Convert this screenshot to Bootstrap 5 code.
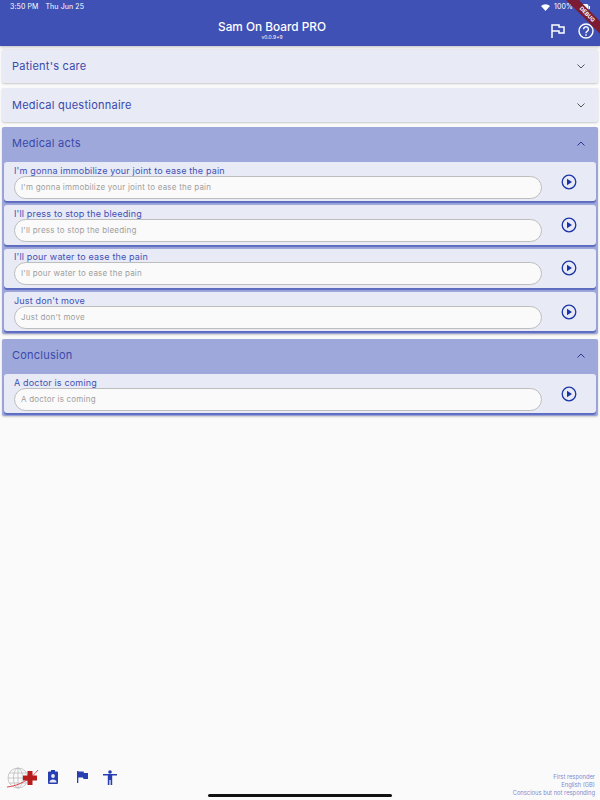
<!DOCTYPE html>
<html lang="en">
<head>
  <meta charset="UTF-8" />
  <meta name="viewport" content="width=device-width, initial-scale=1" />
  <title>Sam On Board PRO</title>
  <link href="https://cdn.jsdelivr.net/npm/bootstrap@5.3.2/dist/css/bootstrap.min.css" rel="stylesheet">
  <style>
    html, body { height: 100%; }
    body {
      font-family: Inter, "Liberation Sans", sans-serif;
      background: #fafafa;
      height: 800px;
      overflow: hidden;
      position: relative;
    }
    .app-bar { background: #3f51b5; color: #fff; height: 46px; box-shadow: 0 1px 3px rgba(0,0,0,.25); position: relative; overflow: hidden; }
    .status-row { height: 14px; padding: 0 10px 0 10px; font-size: 7px; line-height: 14px; letter-spacing: .1px; }
    .status-row .time { margin-right: 7px; }
    .title-row { height: 32px; position: relative; padding-right: 56px; padding-top: 6px; }
    .app-title { font-size: 11.8px; font-weight: 500; line-height: 14px; }
    .app-version { font-size: 5px; line-height: 6px; margin-top: 0; }
    .bar-actions { position: absolute; right: 6px; top: 9px; }
    .help-icon { margin-left: 13px; }
    .debug-ribbon {
      position: absolute; top: 10px; right: -16px; width: 58px; height: 9px;
      background: #7b1c33; color: #fff; font-size: 5.5px; font-weight: 700; line-height: 9px;
      text-align: center; transform: rotate(45deg);
    }
    .panels { padding: 3px 2px 0; }
    .panel-box { background: #e8eaf6; margin-bottom: 5px; border-radius: 2px; box-shadow: 0 1px 2px rgba(0,0,0,.2); }
    .panel-box.is-open { background: #9fa8da; margin-bottom: 4.67px; padding-bottom: 3px; }
    .panel-head { height: 34px; padding: 1px 13px 0 10px; color: #3949ab; font-size: 11px; letter-spacing: .24px; }
    .is-open .panel-head { height: 35px; padding: 0 13px 2px 10px; }
    .act-item {
      background: #e8eaf6; margin: 0 2px 4px; height: 39.33px; border-radius: 3px;
      padding: 2.7px 19px 0 10px; box-shadow: 0 2px 1px #5c6bc0;
    }
    .act-item:last-child { margin-bottom: 0; }
    .act-label { font-size: 9px; line-height: 11px; color: #3f51b5; letter-spacing: .17px; }
    .act-input {
      height: 23px; border: 1px solid #bdbdbd; border-radius: 12px; background: #fafafa;
      font-size: 8px; line-height: 21px; color: #9e9e9e; padding: 0 6px; width: 528px; letter-spacing: .21px;
    }
    .play-btn { margin-top: 9px; }
    .bottom-bar { position: absolute; left: 0; right: 0; bottom: 0; height: 36px; padding: 0 5px 0 7px; }
    .bottom-icons { padding-bottom: 10px; }
    .badge-icon { margin-left: 9px; }
    .flag-icon { margin-left: 19px; }
    .person-icon { margin-left: 15px; }
    .bottom-info { font-size: 5.8px; line-height: 8px; color: #7f8bcf; text-align: right; padding-bottom: 3px; }
    .home-line { position: absolute; left: 208px; bottom: 3px; width: 184px; height: 3px; border-radius: 2px; background: #111; }
  </style>
</head>
<body>

<div class="app-bar">
  <div class="status-row d-flex justify-content-between">
    <div><span class="time">3:50 PM</span>Thu Jun 25</div>
    <div class="d-flex align-items-center gap-1">
      <svg width="9" height="7" viewBox="0 0 18 14"><path d="M9 14 0 4a13 13 0 0 1 18 0z" fill="#fff"/></svg>
      <span>100%</span>
      <svg width="13" height="7" viewBox="0 0 13 7"><rect width="11.500" height="7" rx="2" fill="#fff"/><rect x="12" y="2" width="1" height="3" fill="#fff"/></svg>
    </div>
  </div>
  <div class="title-row text-center">
    <div class="app-title">Sam On Board PRO</div>
    <div class="app-version">v0.0.9+9</div>
    <div class="bar-actions d-flex align-items-center">
      <svg width="14" height="14" viewBox="0 0 14 14" fill="none" stroke="#fff" stroke-width="1.500"><path d="M1 14V1h7v2h5v6H8V7H1"/></svg>
      <svg class="help-icon" width="16" height="16" viewBox="0 0 16 16" fill="none" stroke="#fff" stroke-width="1.400"><circle cx="8" cy="8" r="7"/><path d="M5.600 6.200A2.400 2.400 0 1 1 9.200 8.300C8.400 8.800 8 9.200 8 10.200"/><path d="M8 11.200v1.600"/></svg>
    </div>
  </div>
  <div class="debug-ribbon">DEBUG</div>
</div>

<div class="panels">
  <div class="panel-box">
    <div class="panel-head d-flex justify-content-between align-items-center">
      <span>Patient's care</span>
      <svg width="8" height="5" viewBox="0 0 8 5" fill="none" stroke="#555" stroke-width="1"><path d="M.5.5 4 4 7.500 .5"/></svg>
    </div>
  </div>
  <div class="panel-box">
    <div class="panel-head d-flex justify-content-between align-items-center">
      <span>Medical questionnaire</span>
      <svg width="8" height="5" viewBox="0 0 8 5" fill="none" stroke="#555" stroke-width="1"><path d="M.5.5 4 4 7.500 .5"/></svg>
    </div>
  </div>
  <div class="panel-box is-open">
    <div class="panel-head d-flex justify-content-between align-items-center">
      <span>Medical acts</span>
      <svg width="8" height="5" viewBox="0 0 8 5" fill="none" stroke="#283593" stroke-width="1"><path d="M.5 4.500 4 1 7.500 4.500"/></svg>
    </div>
    <div id="actsList"></div>
  </div>
  <div class="panel-box is-open">
    <div class="panel-head d-flex justify-content-between align-items-center">
      <span>Conclusion</span>
      <svg width="8" height="5" viewBox="0 0 8 5" fill="none" stroke="#283593" stroke-width="1"><path d="M.5 4.500 4 1 7.500 4.500"/></svg>
    </div>
    <div id="conclusionList"></div>
  </div>
</div>

<div class="bottom-bar d-flex justify-content-between align-items-end">
  <div class="bottom-icons d-flex align-items-center">
    <svg width="32" height="26" viewBox="0 0 32 26">
      <g fill="none" stroke="#b5b5b5" stroke-width=".7"><circle cx="11" cy="14" r="10"/><ellipse cx="11" cy="14" rx="4.500" ry="10"/><path d="M1 14h20M2.500 9h17M2.500 19h17M11 4v20"/></g>
      <path d="M0 23C12 22 24 15 31 6" fill="none" stroke="#d9363e" stroke-width=".9"/>
      <path d="M20.500 7h5v4.500H30v5h-4.500V21h-5v-4.500H16v-5h4.500z" fill="#b71c1c"/>
    </svg>
    <svg class="badge-icon" width="10" height="14" viewBox="0 0 10 14"><path d="M1 1.500h8a1 1 0 0 1 1 1V13a1 1 0 0 1-1 1H1a1 1 0 0 1-1-1V2.500a1 1 0 0 1 1-1z" fill="#283fb1"/><rect x="3" y="0" width="4" height="2" fill="#283fb1"/><circle cx="5" cy="6" r="1.900" fill="#e8eaf6"/><path d="M1.500 12.500c0-2.200 1.500-3 3.500-3s3.500.8 3.500 3z" fill="#e8eaf6"/></svg>
    <svg class="flag-icon" width="11" height="12" viewBox="0 0 11 12"><path d="M0 0h1.300v12H0zM1.300 .5H6.500l.5 1.500h4v6H6.500L6 6.500H1.300z" fill="#283fb1"/></svg>
    <svg class="person-icon" width="14" height="15" viewBox="0 0 14 15"><circle cx="7" cy="2" r="1.800" fill="#283fb1"/><path d="M0 4h14v1.600H9.200V15H7.600v-5H6.400v5H4.800V5.600H0z" fill="#283fb1"/></svg>
  </div>
  <div class="bottom-info">First responder<br>English (GB)<br>Conscious but not responding</div>
</div>
<div class="home-line"></div>

<script>
  const acts = ["I'm gonna immobilize your joint to ease the pain", "I'll press to stop the bleeding", "I'll pour water to ease the pain", "Just don't move"];
  const conclusion = ["A doctor is coming"];

  function itemHtml(text) {
    return `
      <div class="act-item d-flex justify-content-between">
        <div>
          <div class="act-label">${text}</div>
          <div class="act-input">${text}</div>
        </div>
        <svg class="play-btn" width="16" height="16" viewBox="0 0 16 16"><circle cx="8" cy="8" r="6.800" fill="none" stroke="#1a35a8" stroke-width="1.300"/><path d="M6 4.800v6.400L11 8z" fill="#1a35a8"/></svg>
      </div>`;
  }

  document.getElementById("actsList").innerHTML = acts.map(itemHtml).join("");
  document.getElementById("conclusionList").innerHTML = conclusion.map(itemHtml).join("");
</script>
<script src="https://cdn.jsdelivr.net/npm/bootstrap@5.3.2/dist/js/bootstrap.bundle.min.js"></script>
</body>
</html>
